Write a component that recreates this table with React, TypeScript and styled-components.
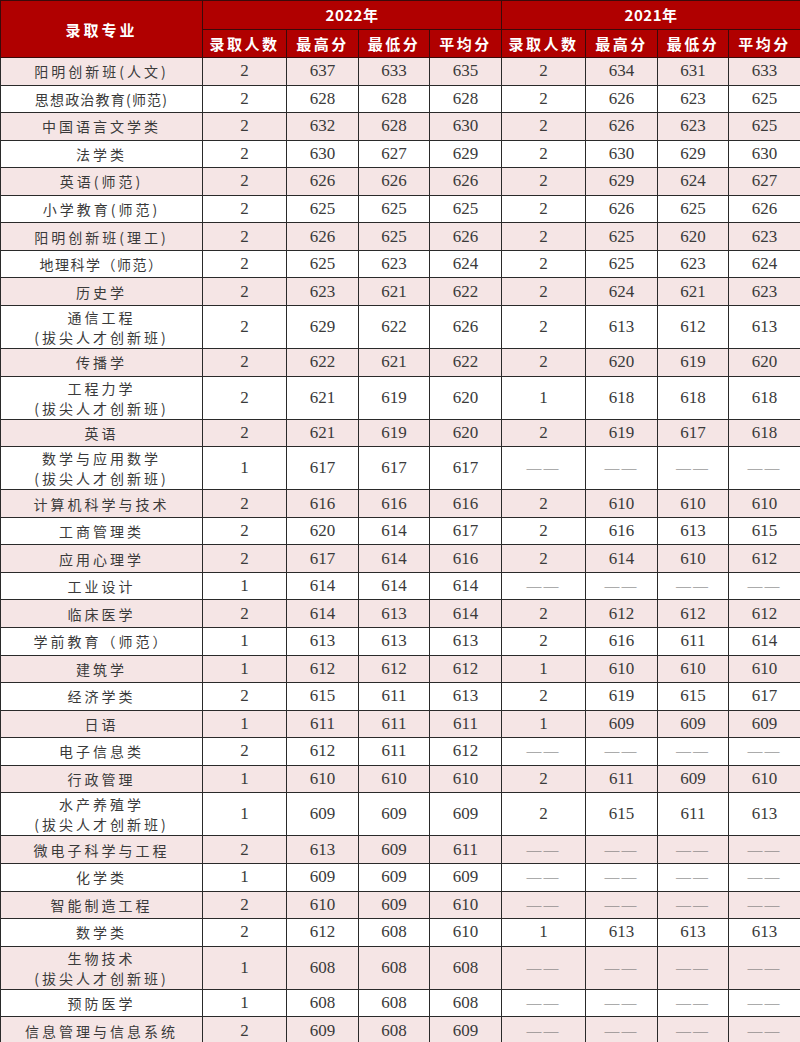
import React from 'react';
import styled, { createGlobalStyle } from 'styled-components';

const GlobalStyle = createGlobalStyle`
  html, body {
    margin: 0;
    padding: 0;
    background: #ffffff;
  }
`;

const Table = styled.table`
  width: 800px;
  border-collapse: collapse;
  table-layout: fixed;
  font-family: "Liberation Serif", "Noto Sans CJK SC", serif;
`;

const HeadCell = styled.th<{ $h: number; $spacing?: number }>`
  height: ${(p) => p.$h}px;
  padding: 0;
  background: #b00000;
  color: #ffffff;
  border: 1px solid #3a0a0a;
  font-family: "Noto Sans CJK SC", sans-serif;
  font-weight: 700;
  font-size: 15px;
  letter-spacing: ${(p) => p.$spacing ?? 2.5}px;
  text-align: center;
  vertical-align: middle;
`;

const Row = styled.tr<{ $h: number }>`
  height: ${(p) => p.$h}px;
  background: #ffffff;

  &:nth-child(odd) {
    background: #f5e5e5;
  }
`;

const NameCell = styled.td<{ $spacing: number }>`
  padding: 0;
  border: 1px solid #2a2a2a;
  color: #3a3a3a;
  font-family: "Noto Sans CJK SC", sans-serif;
  font-size: 14px;
  line-height: 20px;
  letter-spacing: ${(p) => p.$spacing}px;
  text-align: center;
  vertical-align: middle;
`;

const NameLine = styled.div`
  line-height: 20px;
`;

const NumCell = styled.td`
  padding: 0;
  border: 1px solid #2a2a2a;
  color: #3a3a3a;
  font-family: "Liberation Serif", "Times New Roman", serif;
  font-size: 17px;
  text-align: center;
  vertical-align: middle;
`;

const Dash = styled.span`
  color: #6a6a6a;
  letter-spacing: 2px;
  font-size: 15px;
`;

type Major = {
  name: string[];
  spacing?: number;
  y22: string[];
  y21?: string[];
};

const majors: Major[] = [
  { name: ['阳明创新班(人文)'], y22: ['2', '637', '633', '635'], y21: ['2', '634', '631', '633'] },
  { name: ['思想政治教育(师范)'], spacing: 1.2, y22: ['2', '628', '628', '628'], y21: ['2', '626', '623', '625'] },
  { name: ['中国语言文学类'], y22: ['2', '632', '628', '630'], y21: ['2', '626', '623', '625'] },
  { name: ['法学类'], y22: ['2', '630', '627', '629'], y21: ['2', '630', '629', '630'] },
  { name: ['英语(师范)'], y22: ['2', '626', '626', '626'], y21: ['2', '629', '624', '627'] },
  { name: ['小学教育(师范)'], y22: ['2', '625', '625', '625'], y21: ['2', '626', '625', '626'] },
  { name: ['阳明创新班(理工)'], y22: ['2', '626', '625', '626'], y21: ['2', '625', '620', '623'] },
  { name: ['地理科学（师范）'], spacing: 1.5, y22: ['2', '625', '623', '624'], y21: ['2', '625', '623', '624'] },
  { name: ['历史学'], y22: ['2', '623', '621', '622'], y21: ['2', '624', '621', '623'] },
  { name: ['通信工程', '(拔尖人才创新班)'], y22: ['2', '629', '622', '626'], y21: ['2', '613', '612', '613'] },
  { name: ['传播学'], y22: ['2', '622', '621', '622'], y21: ['2', '620', '619', '620'] },
  { name: ['工程力学', '(拔尖人才创新班)'], y22: ['2', '621', '619', '620'], y21: ['1', '618', '618', '618'] },
  { name: ['英语'], y22: ['2', '621', '619', '620'], y21: ['2', '619', '617', '618'] },
  { name: ['数学与应用数学', '(拔尖人才创新班)'], y22: ['1', '617', '617', '617'] },
  { name: ['计算机科学与技术'], y22: ['2', '616', '616', '616'], y21: ['2', '610', '610', '610'] },
  { name: ['工商管理类'], y22: ['2', '620', '614', '617'], y21: ['2', '616', '613', '615'] },
  { name: ['应用心理学'], y22: ['2', '617', '614', '616'], y21: ['2', '614', '610', '612'] },
  { name: ['工业设计'], y22: ['1', '614', '614', '614'] },
  { name: ['临床医学'], y22: ['2', '614', '613', '614'], y21: ['2', '612', '612', '612'] },
  { name: ['学前教育（师范）'], y22: ['1', '613', '613', '613'], y21: ['2', '616', '611', '614'] },
  { name: ['建筑学'], y22: ['1', '612', '612', '612'], y21: ['1', '610', '610', '610'] },
  { name: ['经济学类'], y22: ['2', '615', '611', '613'], y21: ['2', '619', '615', '617'] },
  { name: ['日语'], y22: ['1', '611', '611', '611'], y21: ['1', '609', '609', '609'] },
  { name: ['电子信息类'], y22: ['2', '612', '611', '612'] },
  { name: ['行政管理'], y22: ['1', '610', '610', '610'], y21: ['2', '611', '609', '610'] },
  { name: ['水产养殖学', '(拔尖人才创新班)'], y22: ['1', '609', '609', '609'], y21: ['2', '615', '611', '613'] },
  { name: ['微电子科学与工程'], y22: ['2', '613', '609', '611'] },
  { name: ['化学类'], y22: ['1', '609', '609', '609'] },
  { name: ['智能制造工程'], y22: ['2', '610', '609', '610'] },
  { name: ['数学类'], y22: ['2', '612', '608', '610'], y21: ['1', '613', '613', '613'] },
  { name: ['生物技术', '(拔尖人才创新班)'], y22: ['1', '608', '608', '608'] },
  { name: ['预防医学'], y22: ['1', '608', '608', '608'] },
  { name: ['信息管理与信息系统'], y22: ['2', '609', '608', '609'] },
];

const subHeads = ['录取人数', '最高分', '最低分', '平均分'];
const widths = [202, 84, 72, 71, 72, 84, 72, 71, 72];

const App = () => {
  return (
    <>
      <GlobalStyle />
      <Table>
        <colgroup>
          {widths.map((w, i) => (
            <col key={i} style={{ width: w }} />
          ))}
        </colgroup>
        <thead>
          <tr>
            <HeadCell $h={27.5} rowSpan={2} $spacing={3}>录取专业</HeadCell>
            <HeadCell $h={27.5} colSpan={4} $spacing={0.5}>2022年</HeadCell>
            <HeadCell $h={27.5} colSpan={4} $spacing={0.5}>2021年</HeadCell>
          </tr>
          <tr>
            {[...subHeads, ...subHeads].map((s, i) => (
              <HeadCell $h={27.5} key={i}>{s}</HeadCell>
            ))}
          </tr>
        </thead>
        <tbody>
          {majors.map((m, i) => (
            <Row key={i} $h={m.name.length > 1 ? 43.1 : 27.55}>
              <NameCell $spacing={m.spacing ?? 3}>
                {m.name.map((line, j) => (
                  <NameLine key={j}>{line}</NameLine>
                ))}
              </NameCell>
              {m.y22.map((v, j) => (
                <NumCell key={j}>{v}</NumCell>
              ))}
              {m.y21
                ? m.y21.map((v, j) => <NumCell key={j}>{v}</NumCell>)
                : [0, 1, 2, 3].map((j) => (
                    <NumCell key={j}>
                      <Dash>——</Dash>
                    </NumCell>
                  ))}
            </Row>
          ))}
        </tbody>
      </Table>
    </>
  );
};

export default App;
